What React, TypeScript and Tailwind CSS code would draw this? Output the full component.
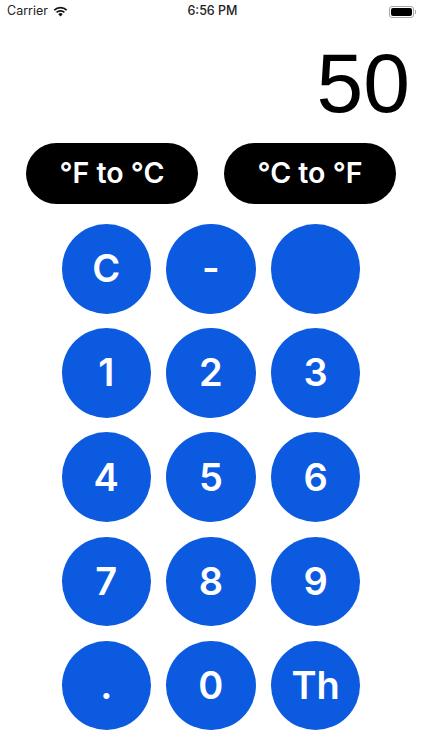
const KEYS = ["C", "-", "", "1", "2", "3", "4", "5", "6", "7", "8", "9", ".", "0", "Th"];

function WifiIcon() {
  return (
    <svg width="15" height="11" viewBox="0 0 16 12" fill="#111">
      <path d="M8 11.5 5.6 8.9a3.4 3.4 0 0 1 4.8 0L8 11.5Z" />
      <path d="M4.4 7.7 3.1 6.3a7 7 0 0 1 9.8 0l-1.3 1.4a5.2 5.2 0 0 0-7.2 0Z" />
      <path d="M1.9 5.1.6 3.7a10.6 10.6 0 0 1 14.8 0l-1.3 1.4a8.8 8.8 0 0 0-12.2 0Z" />
    </svg>
  );
}

function BatteryIcon() {
  return (
    <div className="flex items-center gap-[1px]">
      <div className="w-[25px] h-[12px] rounded-[3px] border border-[#a8a8a8] p-[1px]">
        <div className="w-full h-full rounded-[2px] bg-black" />
      </div>
      <div className="w-[1px] h-[4px] bg-[#a8a8a8]" />
    </div>
  );
}

export default function App() {
  return (
    <div className="w-[422px] h-[750px] bg-white overflow-hidden font-['Inter',sans-serif]">
      {/* Status bar */}
      <div className="h-[22px] pt-[1px] pl-[7px] pr-[6px] grid grid-cols-3 items-center text-[#222] font-['Inter',sans-serif] text-[12.5px]">
        <div className="flex items-center gap-[5px]">
          <span>Carrier</span>
          <WifiIcon />
        </div>
        <div className="text-center font-medium pl-[2px]">6:56 PM</div>
        <div className="flex justify-end">
          <BatteryIcon />
        </div>
      </div>

      {/* Display */}
      <div className="h-[121px] pr-[12px] flex items-center justify-end">
        <span className="font-['Liberation_Sans',sans-serif] text-[84px] leading-none text-black mt-[1px]">50</span>
      </div>

      {/* Conversions */}
      <div className="flex justify-center gap-[26px]">
        <button className="w-[172px] h-[61px] rounded-full bg-black text-white text-[28.5px] font-semibold">°F to °C</button>
        <button className="w-[172px] h-[61px] rounded-full bg-black text-white text-[28.5px] font-semibold">°C to °F</button>
      </div>

      {/* Keypad */}
      <div className="mt-[20px] mx-auto w-[299px] grid grid-cols-3 gap-x-[15px] gap-y-[14.7px]">
        {KEYS.map((k, i) => (
          <button
            key={i}
            className="w-[89.5px] h-[89.5px] rounded-full bg-[#0b5ae0] text-white text-[38px] font-semibold flex items-center justify-center"
          >
            {k}
          </button>
        ))}
      </div>
    </div>
  );
}
